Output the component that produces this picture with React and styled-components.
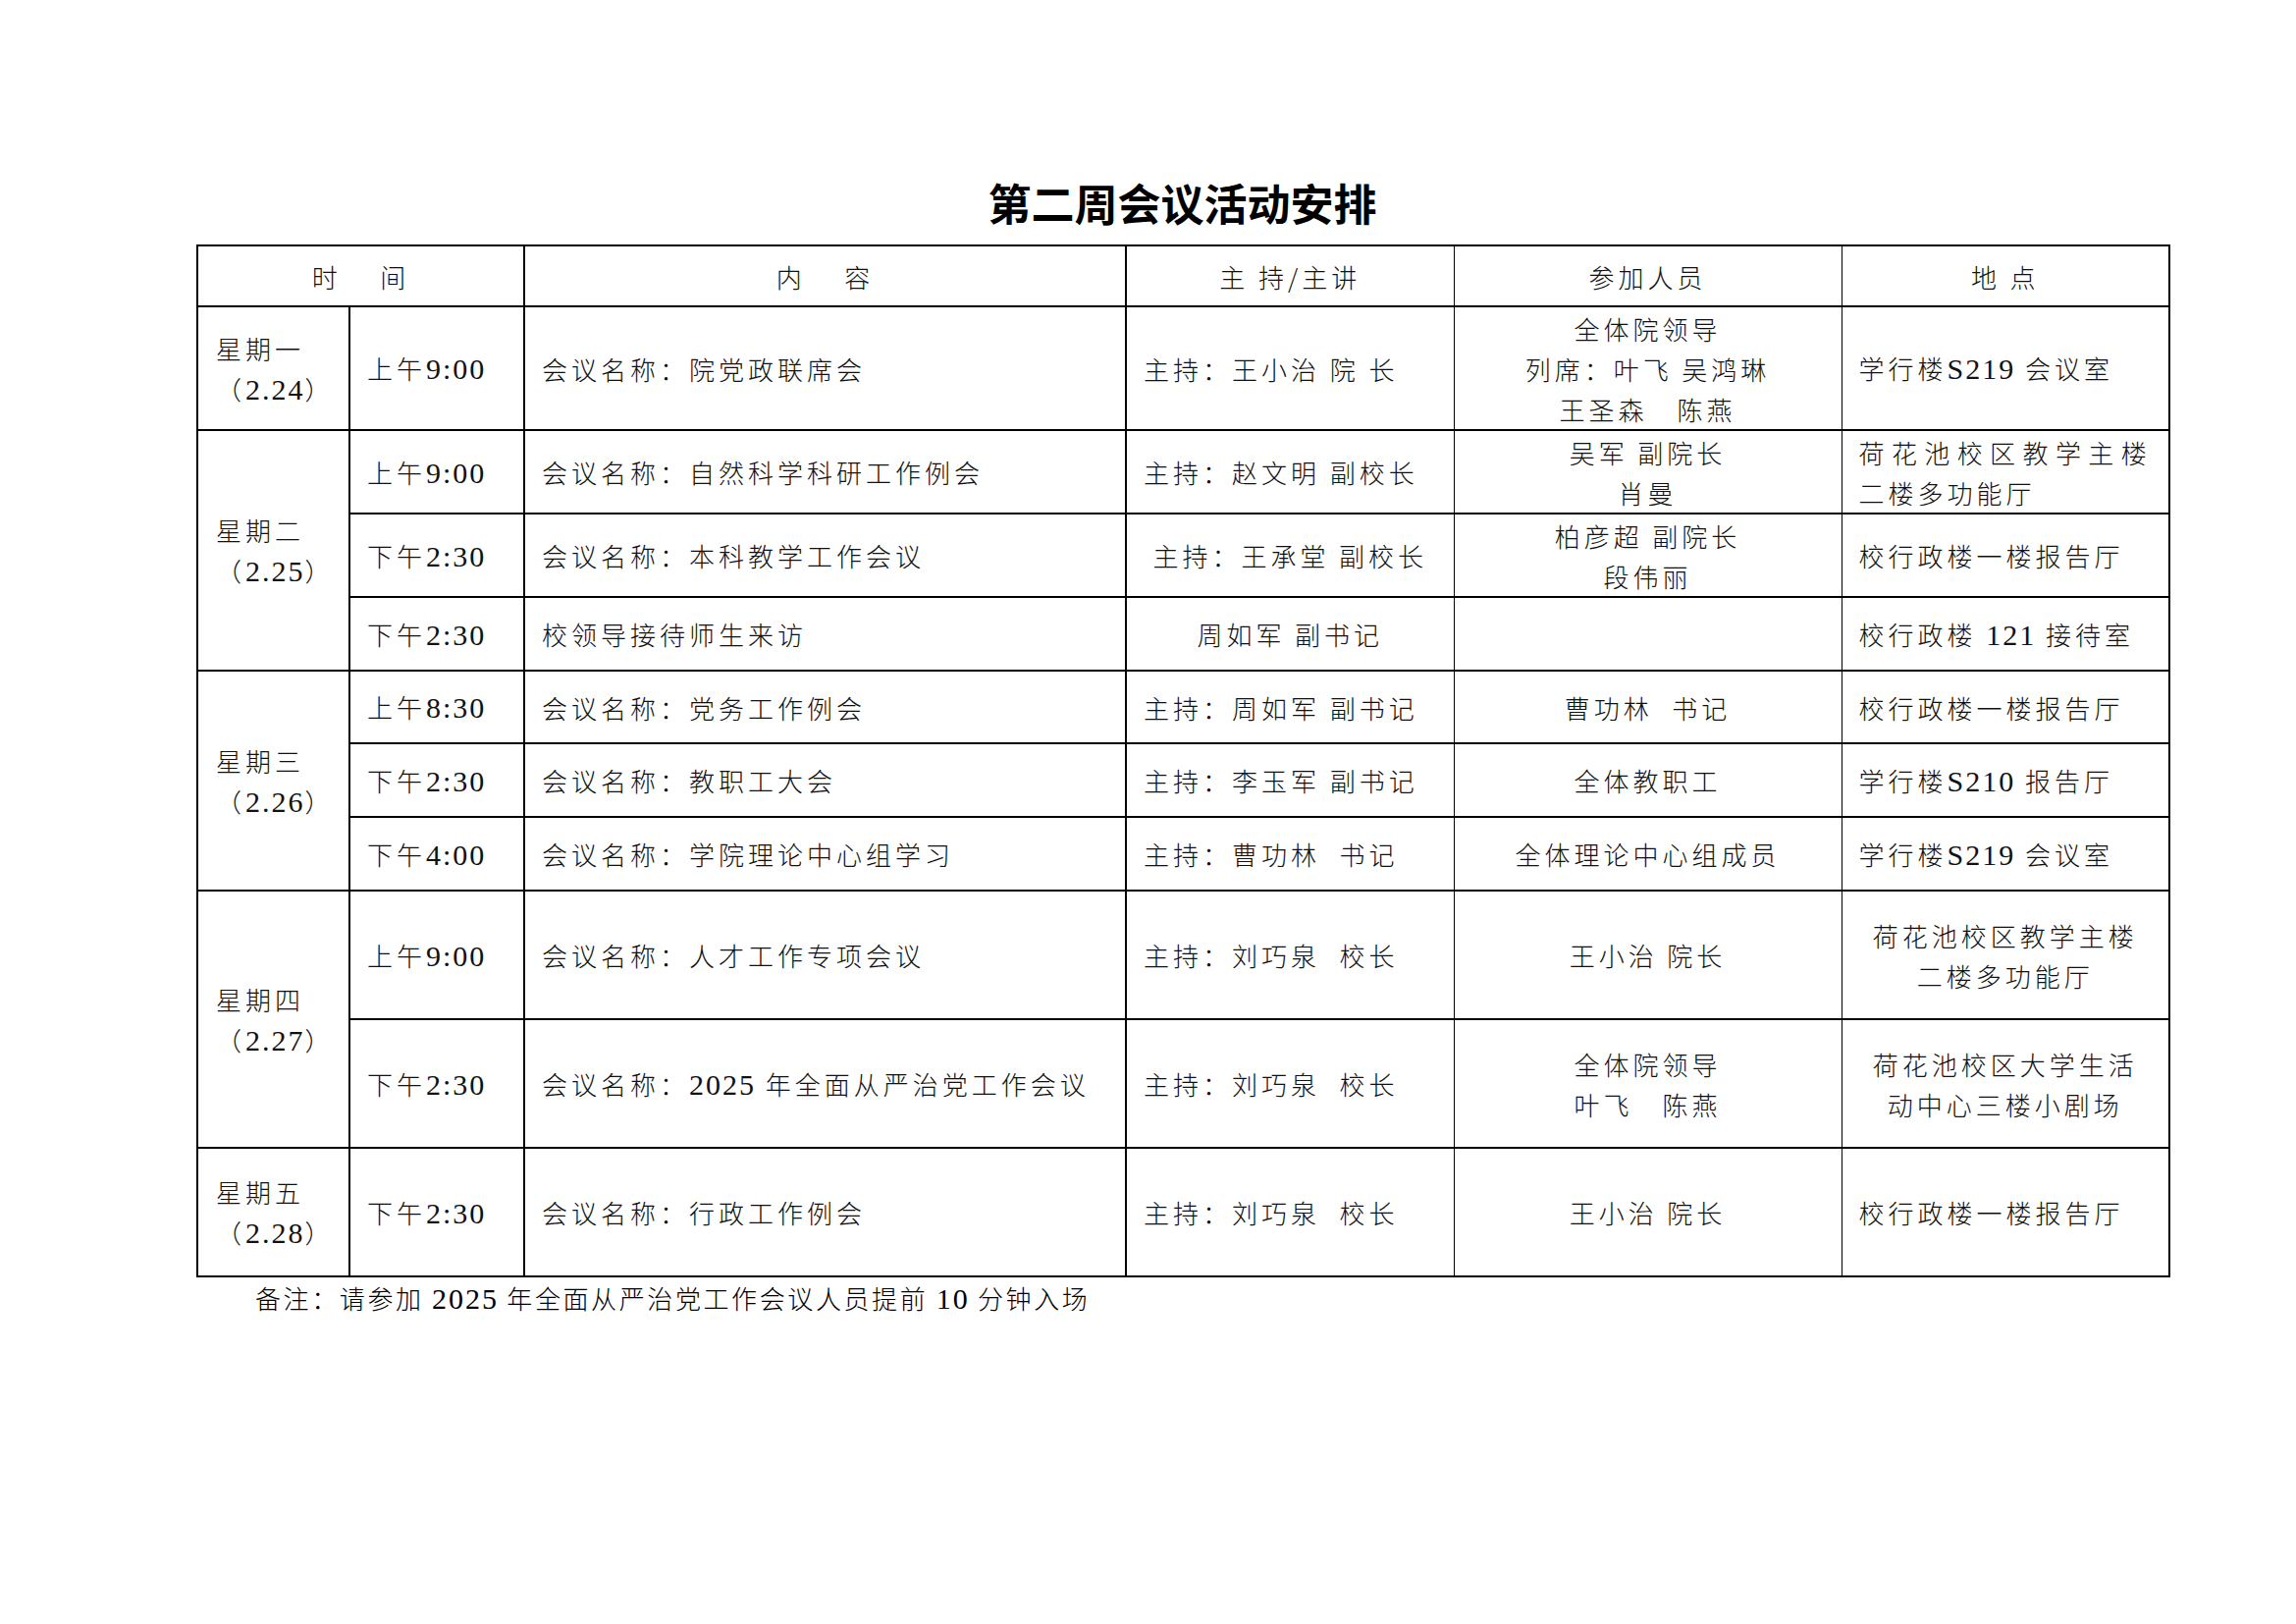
import styled, { createGlobalStyle } from 'styled-components';

const GlobalStyle = createGlobalStyle`
  html, body {
    margin: 0;
    padding: 0;
    background: #fff;
  }
  body {
    font-family: "Noto Sans CJK SC", sans-serif;
    color: #111;
  }
`

const Page = styled.div`
  width: 2339px;
  min-height: 1654px;
  box-sizing: border-box;
  padding: 176px 0 0 200px;
`

const Title = styled.h1`
  width: 2009px;
  margin: 0 0 13px;
  text-align: center;
  font-family: "Noto Sans CJK SC", sans-serif;
  font-size: 44px;
  line-height: 60px;
  font-weight: 700;
  color: #000;
`

const Schedule = styled.table`
  width: 2009px;
  border-collapse: collapse;
  table-layout: fixed;
  font-family: "Noto Sans CJK SC", sans-serif;
  font-size: 26px;
  font-weight: 300;
  letter-spacing: 4px;
`

const Col = styled.col`
  width: ${p => p.$w}px;
`

const Row = styled.tr`
  height: ${p => p.$h}px;
`

// thick lines everywhere, the two rules inside the right half are hairlines
const edge = p => `
  border-left-width: ${p.$thinLeft ? 1 : 2}px;
  border-right-width: ${p.$thinRight ? 1 : 2}px;
`

const HeadCell = styled.th`
  border: 2px solid #000;
  ${edge}
  padding: 0;
  font-weight: 300;
  text-align: center;
  vertical-align: middle;
  line-height: 41px;
  white-space: pre;
`

const Cell = styled.td`
  border: 2px solid #000;
  ${edge}
  padding: 0 17px;
  text-align: ${p => p.$align || 'left'};
  vertical-align: middle;
  line-height: 41px;
  white-space: pre;
`

const DayCell = styled(Cell)`
  padding: 0 18px;
`

const Line = styled.div`
  letter-spacing: ${p => (p.$spread ? '7.4px' : 'inherit')};
`

const Latin = styled.span`
  font-family: "Liberation Serif", serif;
  font-size: 30px;
  font-weight: 400;
  letter-spacing: 2px;
`

const Note = styled.div`
  padding-left: 60px;
  font-family: "Noto Sans CJK SC", sans-serif;
  font-size: 26px;
  font-weight: 300;
  letter-spacing: 2.6px;
  line-height: 41px;
  color: #000;
  white-space: pre;
`

function Txt({ children }) {
  const parts = String(children).split(/([0-9A-Za-z.:]+)/)
  return parts.map((s, i) => (i % 2 ? <Latin key={i}>{s}</Latin> : s))
}

const days = [
  {
    day: '星期一', date: '（2.24）', rows: [
      { h: 126, time: '上午9:00', content: '会议名称：院党政联席会', host: '主持：王小治 院 长', people: ['全体院领导', '列席：叶飞 吴鸿琳', '王圣森　陈燕'], place: ['学行楼S219 会议室'] },
    ],
  },
  {
    day: '星期二', date: '（2.25）', rows: [
      { h: 85, time: '上午9:00', content: '会议名称：自然科学科研工作例会', host: '主持：赵文明 副校长', people: ['吴军 副院长', '肖曼'], place: ['荷花池校区教学主楼', '二楼多功能厅'], spread: true },
      { h: 85, time: '下午2:30', content: '会议名称：本科教学工作会议', host: '主持：王承堂 副校长', hostCenter: true, people: ['柏彦超 副院长', '段伟丽'], place: ['校行政楼一楼报告厅'] },
      { h: 75, time: '下午2:30', content: '校领导接待师生来访', host: '周如军 副书记', hostCenter: true, people: [], place: ['校行政楼 121 接待室'] },
    ],
  },
  {
    day: '星期三', date: '（2.26）', rows: [
      { h: 74, time: '上午8:30', content: '会议名称：党务工作例会', host: '主持：周如军 副书记', people: ['曹功林  书记'], place: ['校行政楼一楼报告厅'] },
      { h: 75, time: '下午2:30', content: '会议名称：教职工大会', host: '主持：李玉军 副书记', people: ['全体教职工'], place: ['学行楼S210 报告厅'] },
      { h: 75, time: '下午4:00', content: '会议名称：学院理论中心组学习', host: '主持：曹功林  书记', people: ['全体理论中心组成员'], place: ['学行楼S219 会议室'] },
    ],
  },
  {
    day: '星期四', date: '（2.27）', rows: [
      { h: 131, time: '上午9:00', content: '会议名称：人才工作专项会议', host: '主持：刘巧泉  校长', people: ['王小治 院长'], place: ['荷花池校区教学主楼', '二楼多功能厅'], placeCenter: true },
      { h: 131, time: '下午2:30', content: '会议名称：2025 年全面从严治党工作会议', host: '主持：刘巧泉  校长', people: ['全体院领导', '叶飞　陈燕'], place: ['荷花池校区大学生活', '动中心三楼小剧场'], placeCenter: true },
    ],
  },
  {
    day: '星期五', date: '（2.28）', rows: [
      { h: 131, time: '下午2:30', content: '会议名称：行政工作例会', host: '主持：刘巧泉  校长', people: ['王小治 院长'], place: ['校行政楼一楼报告厅'] },
    ],
  },
]

function App() {
  return (
    <Page>
      <GlobalStyle />
      <Title>第二周会议活动安排</Title>
      <Schedule>
        <colgroup>
          <Col $w={155} />
          <Col $w={178} />
          <Col $w={613} />
          <Col $w={334} />
          <Col $w={395} />
          <Col $w={334} />
        </colgroup>
        <thead>
          <Row $h={62}>
            <HeadCell colSpan={2}>时　 间</HeadCell>
            <HeadCell>内　 容</HeadCell>
            <HeadCell $thinRight>主 持/主讲</HeadCell>
            <HeadCell $thinLeft $thinRight>参加人员</HeadCell>
            <HeadCell $thinLeft>地 点</HeadCell>
          </Row>
        </thead>
        <tbody>
          {days.map(d =>
            d.rows.map((r, i) => (
              <Row key={d.day + i} $h={r.h}>
                {i === 0 && (
                  <DayCell rowSpan={d.rows.length}>
                    <Line>{d.day}</Line>
                    <Line><Txt>{d.date}</Txt></Line>
                  </DayCell>
                )}
                <Cell><Txt>{r.time}</Txt></Cell>
                <Cell><Txt>{r.content}</Txt></Cell>
                <Cell $thinRight $align={r.hostCenter ? 'center' : 'left'}>{r.host}</Cell>
                <Cell $thinLeft $thinRight $align="center">
                  {r.people.map(p => <Line key={p}>{p}</Line>)}
                </Cell>
                <Cell $thinLeft $align={r.placeCenter ? 'center' : 'left'}>
                  {r.place.map((p, j) => (
                    <Line key={p} $spread={r.spread && j === 0}><Txt>{p}</Txt></Line>
                  ))}
                </Cell>
              </Row>
            ))
          )}
        </tbody>
      </Schedule>
      <Note><Txt>备注：请参加 2025 年全面从严治党工作会议人员提前 10 分钟入场</Txt></Note>
    </Page>
  )
}

export default App
